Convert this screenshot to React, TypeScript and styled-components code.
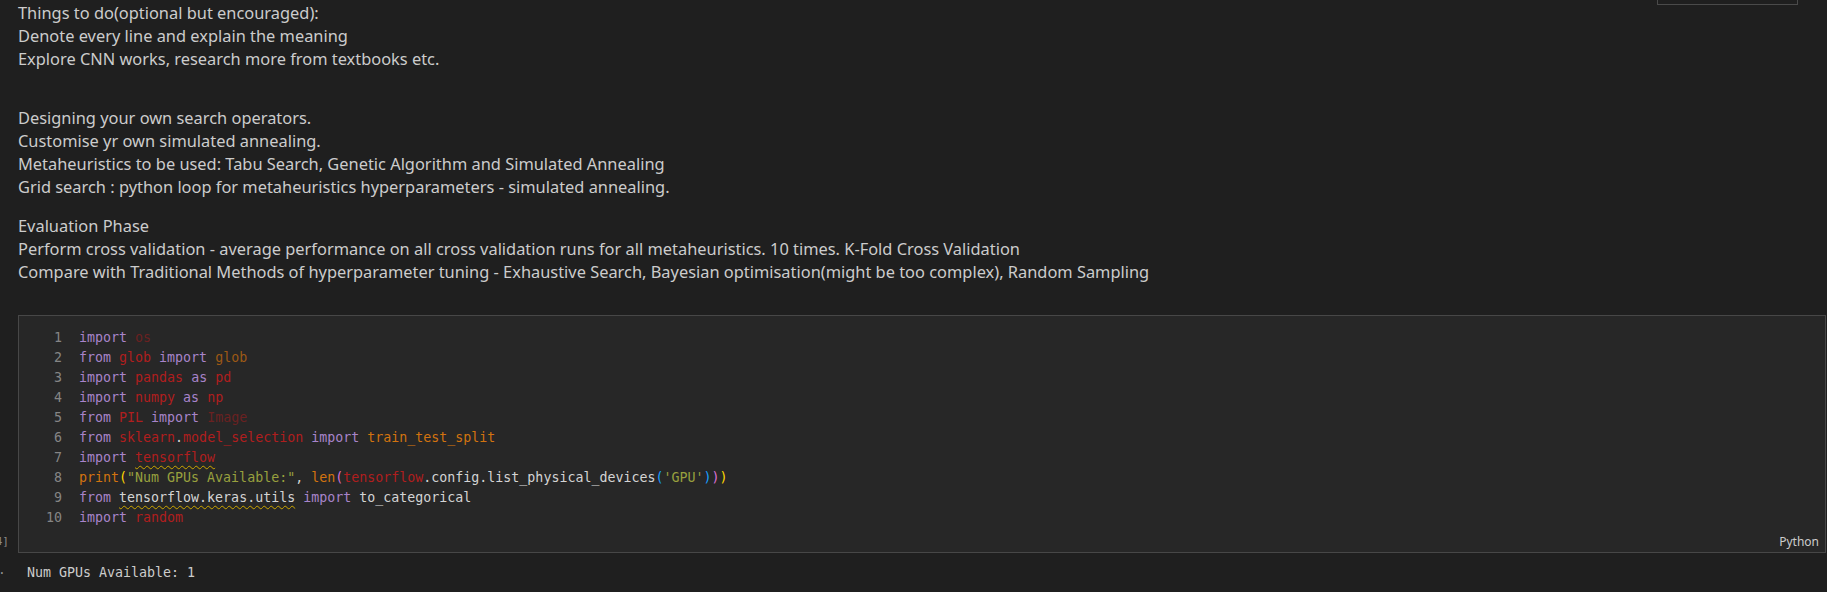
import React from "react";
import styled, { createGlobalStyle } from "styled-components";

const Global = createGlobalStyle`
  html, body { margin: 0; padding: 0; background: #1f1f1f; }
  body { overflow: hidden; }
`;

const MONO = `"DejaVu Sans Mono", "Liberation Mono", monospace`;
const SANS = `"Noto Sans", "Open Sans", Arial, sans-serif`;

const Page = styled.div`
  position: relative;
  width: 1827px;
  height: 592px;
  overflow: hidden;
  background: #1f1f1f;
`;

const CellToolbar = styled.div`
  position: absolute;
  top: -20px;
  left: 1657px;
  width: 139px;
  height: 23px;
  border: 1px solid #4a4a4a;
  background: #1f1f1f;
`;

const Markdown = styled.div`
  padding: 1px 0 0 18px;
  font-family: ${SANS};
  font-size: 16.4px;
  line-height: 23px;
  color: #cccccc;
`;

const Para = styled.div<{ $gap: number }>`
  margin-bottom: ${(p) => p.$gap}px;
`;

const TextLine = styled.div`
  white-space: pre;
`;

const CellRow = styled.div`
  display: flex;
  align-items: flex-end;
  margin-top: 32px;
`;

const ExecGutter = styled.div`
  flex: none;
  width: 18px;
  box-sizing: border-box;
  display: flex;
  justify-content: flex-end;
  overflow: hidden;
  padding: 0 9px 4px 0;
  font-family: ${MONO};
  font-size: 11px;
  line-height: 14px;
  color: #8a8a8a;
  white-space: nowrap;
`;

const Cell = styled.div`
  flex: 1;
  margin-right: 1px;
  border: 1px solid #474747;
  background: #272727;
  padding-top: 12px;
  display: flex;
  flex-direction: column;
`;

const Code = styled.div`
  font-family: ${MONO};
  font-size: 13.3px;
  line-height: 20px;
  color: #d4d4d4;
`;

const CodeLine = styled.div`
  display: flex;
  height: 20px;
  white-space: pre;
`;

const LineNo = styled.span`
  flex: none;
  width: 43px;
  text-align: right;
  color: #858585;
  margin-right: 17px;
`;

const Tok = styled.span<{ $c: string; $warn?: boolean }>`
  color: ${(p) => p.$c};
  ${(p) =>
    p.$warn
      ? `text-decoration: underline wavy #cca700; text-decoration-thickness: 1px; text-underline-offset: 3px;`
      : ""}
`;

const CellFooter = styled.div`
  height: 22px;
  display: flex;
  justify-content: flex-end;
  align-items: flex-end;
  padding: 0 6px 2px 0;
`;

const LangLabel = styled.span`
  font-family: ${SANS};
  font-size: 12px;
  line-height: 16px;
  color: #cccccc;
`;

const OutputRow = styled.div`
  display: flex;
  margin-top: 10px;
  height: 20px;
  line-height: 20px;
`;

const OutputGutter = styled.div`
  flex: none;
  width: 27px;
  color: #9a9a9a;
  font-family: ${SANS};
  font-size: 14px;
`;

const OutputText = styled.div`
  font-family: ${MONO};
  font-size: 13.3px;
  color: #cccccc;
  white-space: pre;
`;

const C = {
  kw: "#a784ca",
  mod: "#b01e1e",
  dim: "#6a2121",
  fn: "#d2730f",
  fnDim: "#9d5915",
  plain: "#d4d4d4",
  str: "#98a03e",
  y: "#ffd700",
  b: "#179fff",
  m: "#da70d6",
};

type T = [string, string, boolean?];

const lines: T[][] = [
  [["import", C.kw], [" ", C.plain], ["os", C.dim]],
  [["from", C.kw], [" ", C.plain], ["glob", C.mod], [" ", C.plain], ["import", C.kw], [" ", C.plain], ["glob", C.fnDim]],
  [["import", C.kw], [" ", C.plain], ["pandas", C.mod], [" ", C.plain], ["as", C.kw], [" ", C.plain], ["pd", C.mod]],
  [["import", C.kw], [" ", C.plain], ["numpy", C.mod], [" ", C.plain], ["as", C.kw], [" ", C.plain], ["np", C.mod]],
  [["from", C.kw], [" ", C.plain], ["PIL", C.mod], [" ", C.plain], ["import", C.kw], [" ", C.plain], ["Image", C.dim]],
  [
    ["from", C.kw],
    [" ", C.plain],
    ["sklearn", C.mod],
    [".", C.plain],
    ["model_selection", C.mod],
    [" ", C.plain],
    ["import", C.kw],
    [" ", C.plain],
    ["train_test_split", C.fn],
  ],
  [["import", C.kw], [" ", C.plain], ["tensorflow", C.mod, true]],
  [
    ["print", C.fn],
    ["(", C.y],
    ['"Num GPUs Available:"', C.str],
    [", ", C.plain],
    ["len", C.fn],
    ["(", C.m],
    ["tensorflow", C.mod],
    [".config.list_physical_devices", C.plain],
    ["(", C.b],
    ["'GPU'", C.str],
    [")", C.b],
    [")", C.m],
    [")", C.y],
  ],
  [
    ["from", C.kw],
    [" ", C.plain],
    ["tensorflow.keras.utils", C.plain, true],
    [" ", C.plain],
    ["import", C.kw],
    [" ", C.plain],
    ["to_categorical", C.plain],
  ],
  [["import", C.kw], [" ", C.plain], ["random", C.mod]],
];

const paragraphs: { lines: string[]; gap: number }[] = [
  {
    lines: [
      "Things to do(optional but encouraged):",
      "Denote every line and explain the meaning",
      "Explore CNN works, research more from textbooks etc.",
    ],
    gap: 35.5,
  },
  {
    lines: [
      "Designing your own search operators.",
      "Customise yr own simulated annealing.",
      "Metaheuristics to be used: Tabu Search, Genetic Algorithm and Simulated Annealing",
      "Grid search : python loop for metaheuristics hyperparameters - simulated annealing.",
    ],
    gap: 16.5,
  },
  {
    lines: [
      "Evaluation Phase",
      "Perform cross validation - average performance on all cross validation runs for all metaheuristics. 10 times. K-Fold Cross Validation",
      "Compare with Traditional Methods of hyperparameter tuning - Exhaustive Search, Bayesian optimisation(might be too complex), Random Sampling",
    ],
    gap: 0,
  },
];

export default function App() {
  return (
    <Page>
      <Global />
      <CellToolbar />
      <Markdown>
        {paragraphs.map((p, i) => (
          <Para key={i} $gap={p.gap}>
            {p.lines.map((l, j) => (
              <TextLine key={j}>{l}</TextLine>
            ))}
          </Para>
        ))}
      </Markdown>
      <CellRow>
        <ExecGutter>[4]</ExecGutter>
        <Cell>
          <Code>
            {lines.map((toks, i) => (
              <CodeLine key={i}>
                <LineNo>{i + 1}</LineNo>
                {toks.map((t, j) => (
                  <Tok key={j} $c={t[1]} $warn={t[2]}>
                    {t[0]}
                  </Tok>
                ))}
              </CodeLine>
            ))}
          </Code>
          <CellFooter>
            <LangLabel>Python</LangLabel>
          </CellFooter>
        </Cell>
      </CellRow>
      <OutputRow>
        <OutputGutter>·</OutputGutter>
        <OutputText>Num GPUs Available: 1</OutputText>
      </OutputRow>
    </Page>
  );
}
